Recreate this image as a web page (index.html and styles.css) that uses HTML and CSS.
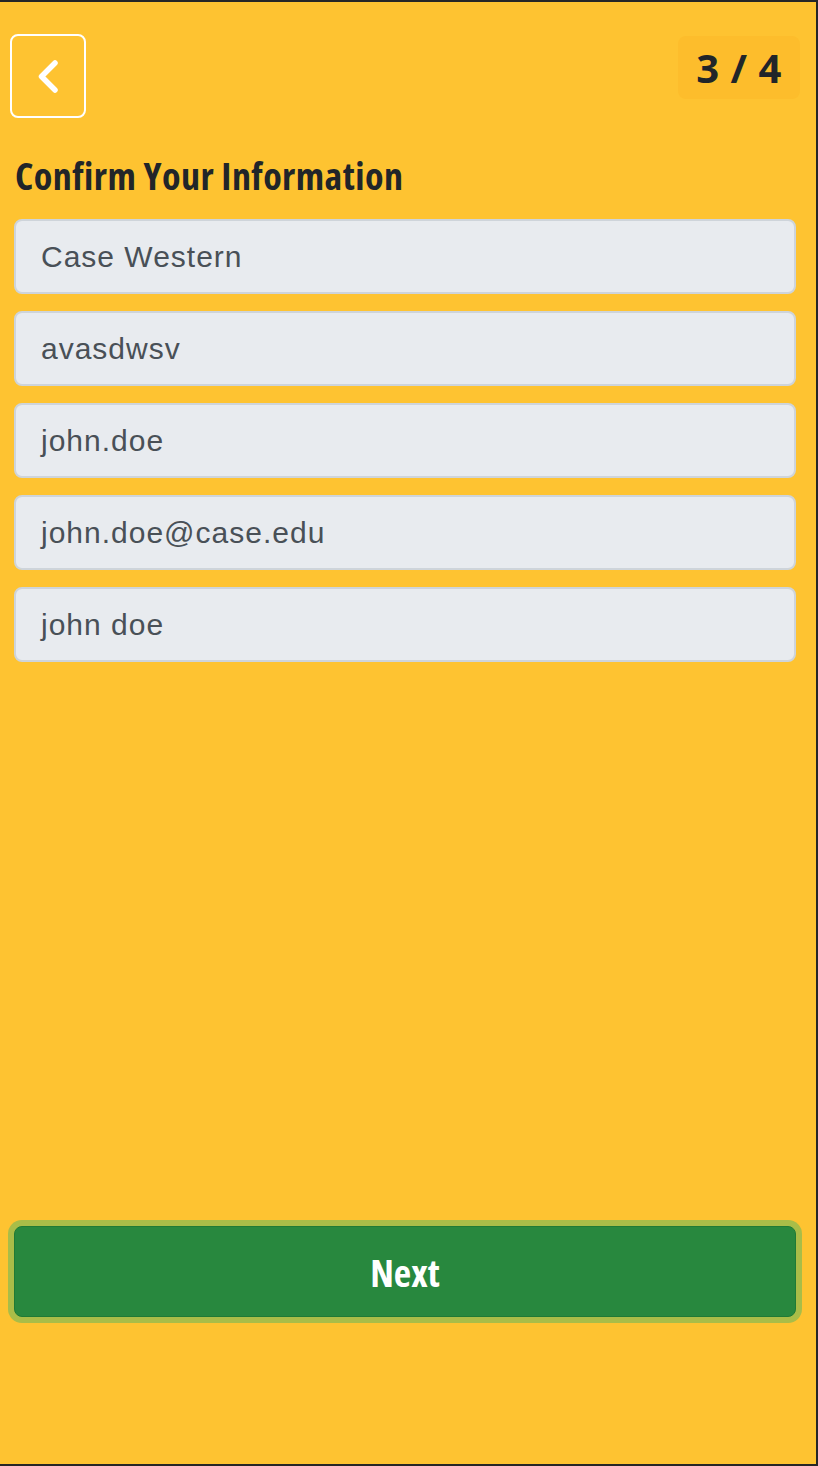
FILE: index.html
```html
<!DOCTYPE html>
<html lang="en">
<head>
<meta charset="utf-8">
<title>Confirm Your Information</title>
<link rel="stylesheet" href="styles.css">
</head>
<body>
<div class="screen">
  <header class="top-bar">
    <button class="back-btn" aria-label="Back">
      <svg width="24" height="35" viewBox="0 0 24 35" aria-hidden="true">
        <path d="M19 4 L5.5 17.5 L19 31" fill="none" stroke="#ffffff" stroke-width="5.5" stroke-linecap="round" stroke-linejoin="round"/>
      </svg>
    </button>
    <div class="step-count">3 / 4</div>
  </header>

  <h1 class="title">Confirm Your Information</h1>

  <div class="fields">
    <div class="field">Case Western</div>
    <div class="field">avasdwsv</div>
    <div class="field">john.doe</div>
    <div class="field">john.doe@case.edu</div>
    <div class="field">john doe</div>
  </div>

  <div class="actions">
    <button class="next-btn">Next</button>
  </div>
</div>
</body>
</html>
```

FILE: styles.css
```css
html, body {
  margin: 0;
  padding: 0;
}

body {
  background: #fec331;
}

.screen {
  box-sizing: border-box;
  width: 818px;
  height: 1466px;
  background: #fec331;
  border-top: 2px solid #262626;
  border-right: 2px solid #262626;
  border-bottom: 2px solid #262626;
  display: flex;
  flex-direction: column;
  padding: 0 20px 0 14px;
}

.top-bar {
  display: flex;
  justify-content: space-between;
  align-items: flex-start;
  margin-top: 32px;
  margin-left: -4px;
  margin-right: -4px;
}

.back-btn {
  box-sizing: border-box;
  width: 76px;
  height: 84px;
  border: 2px solid #ffffff;
  border-radius: 8px;
  background: transparent;
  display: flex;
  align-items: center;
  justify-content: center;
  padding: 0;
  margin: 0;
}

.step-count {
  box-sizing: border-box;
  margin-top: 2px;
  width: 122px;
  height: 63px;
  background: #fdbd2c;
  border-radius: 8px;
  display: flex;
  align-items: center;
  justify-content: center;
  font-family: "Open Sans", "Noto Sans", sans-serif;
  font-weight: 700;
  font-size: 40px;
  color: #212529;
  letter-spacing: 0.5px;
}

.title {
  margin: 35px 0 0 1px;
  font-family: "Open Sans", "Liberation Sans Narrow", sans-serif;
  font-stretch: 75%;
  font-weight: 700;
  font-size: 38px;
  letter-spacing: 0.45px;
  line-height: 44px;
  color: #212529;
}

.fields {
  display: flex;
  flex-direction: column;
  gap: 17px;
  margin-top: 22px;
}

.field {
  box-sizing: border-box;
  height: 75px;
  background: #e8ebef;
  border: 2px solid #ced4da;
  border-radius: 8px;
  padding: 0 25px;
  display: flex;
  align-items: center;
  font-family: "Liberation Sans", Arial, sans-serif;
  font-size: 30px;
  letter-spacing: 1px;
  color: #495057;
}

.actions {
  margin-top: auto;
  margin-bottom: 147px;
}

.next-btn {
  box-sizing: border-box;
  width: 100%;
  height: 91px;
  background: #28883e;
  border: 1px solid #1f7a35;
  border-radius: 8px;
  box-shadow: 0 0 0 6px #a9bd48;
  color: #ffffff;
  font-family: "Open Sans", "Liberation Sans Narrow", sans-serif;
  font-stretch: 75%;
  font-weight: 700;
  font-size: 38px;
  padding: 0;
  margin: 0;
}
```
